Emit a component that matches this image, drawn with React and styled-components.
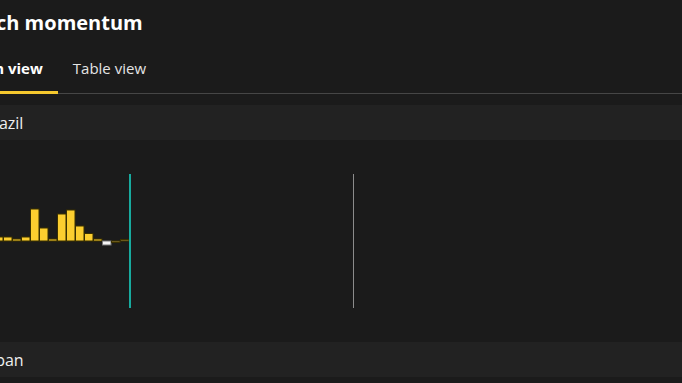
import React from 'react'
import styled, { createGlobalStyle } from 'styled-components'

const GlobalStyle = createGlobalStyle`
  html, body {
    margin: 0;
    padding: 0;
    background: #1b1b1b;
    overflow: hidden;
  }
  body {
    font-family: "Open Sans", "Noto Sans", sans-serif;
    color: #ececec;
  }
`;

const SHIFT = 40;

const Page = styled.div`
  margin-left: -${SHIFT}px;
  width: calc(100% + ${SHIFT}px);
  height: 383px;
  display: flex;
  flex-direction: column;
`;

const Title = styled.h1`
  margin: 0;
  padding: 7px 0 0 0;
  margin-left: ${p => p.$indent}px;
  font-size: 20px;
  line-height: 32px;
  font-weight: 700;
  color: #fff;
  white-space: nowrap;
`;

const Tabs = styled.div`
  display: flex;
  margin-top: 17px;
  margin-left: ${p => p.$indent}px;
  border-bottom: 1px solid #464646;
`;

const Tab = styled.div`
  padding: 0 15px 11px;
  font-size: 15px;
  line-height: 24px;
  font-weight: ${p => (p.$active ? 700 : 400)};
  color: ${p => (p.$active ? '#fff' : '#e4e4e4')};
  border-bottom: 3px solid ${p => (p.$active ? '#f5c82e' : 'transparent')};
  margin-bottom: -1px;
  white-space: nowrap;
`;

const CountryRow = styled.div`
  margin-top: ${p => p.$top}px;
  height: 35px;
  display: flex;
  align-items: center;
  background: #222;
  font-size: 16px;
  color: #efefef;
  padding-left: ${p => p.$indent}px;
`;

const Chart = styled.div`
  height: 202px;
`;

const bars = [
  { h: 4 }, { h: 4 }, { h: 4 }, { h: 2 }, { h: 4 }, { h: 32 }, { h: 13 }, { h: 2 },
  { h: 27 }, { h: 31 }, { h: 15 }, { h: 7.5 }, { h: 2 },
  { h: -4, kind: 'neg' }, { h: -1.5, kind: 'dim' }, { h: 1.5, kind: 'dim' },
];

const BarChart = () => {
  const base = 101;
  const start = SHIFT - 15;
  return (
    <svg width="100%" height="202">
      {bars.map((b, i) => {
        const x = start + i * 9;
        const y = b.h >= 0 ? base - b.h : base;
        const fill = b.kind === 'neg' ? '#f4f4f4' : b.kind === 'dim' ? '#9a8236' : '#fcce2f';
        const stroke = b.kind === 'neg' ? '#777' : '#3a3000';
        return (
          <rect key={i} x={x + 0.5} y={y} width={8.5} height={Math.abs(b.h)}
            fill={fill} stroke={stroke} strokeWidth="1" />
        );
      })}
      <rect x={SHIFT + 129} y={34} width={2} height={134} fill="#18aa9e" />
      <rect x={SHIFT + 353} y={34} width={1} height={134} fill="#8c8c8c" />
    </svg>
  );
};

const App = () => (
  <>
    <GlobalStyle />
    <Page>
      <Title $indent={-8}>Search momentum</Title>
      <Tabs $indent={-17}>
        <Tab $active>Graph view</Tab>
        <Tab>Table view</Tab>
      </Tabs>
      <CountryRow $top={11} $indent={22}>Brazil</CountryRow>
      <Chart>
        <BarChart />
      </Chart>
      <CountryRow $top={0} $indent={22}>Japan</CountryRow>
    </Page>
  </>
);

export default App
